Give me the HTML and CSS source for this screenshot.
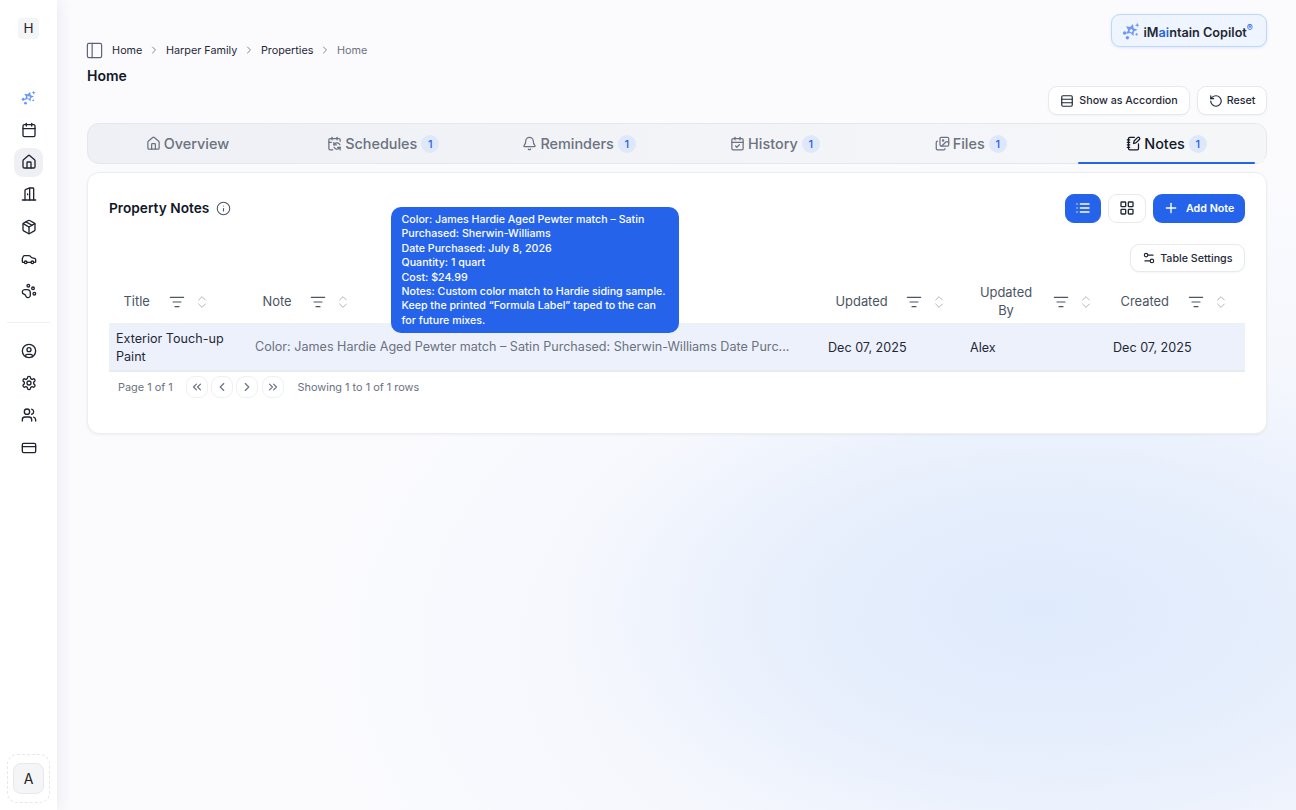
FILE: index.html
```html
<!DOCTYPE html>
<html lang="en">
<head>
<meta charset="utf-8">
<title>Home</title>
<link rel="stylesheet" href="styles.css">
</head>
<body>
<svg class="sprite" aria-hidden="true">
  <symbol id="i-sparkle" viewBox="0 0 24 24"><path fill-rule="evenodd" d="M14.6 2.6l.9 5.6 5.3 2-5 2.6-.5 5.7-4.1-4-5.6 1.3 2.6-5.1-2.9-4.9 5.6.9zM13.2 8.6l-1.5 1.6-2-.3 1 1.8-.9 1.8 2-.4 1.5 1.4.2-2 1.8-1-1.9-.7z"/><path d="M20.3 1l.9 2.3 2.3.9-2.3.9-.9 2.3-.9-2.3-2.3-.9 2.3-.9z"/><circle cx="3.6" cy="14.6" r="2.4"/><circle cx="7.2" cy="21" r="2.2"/><circle cx="19.5" cy="16.5" r="1.5"/></symbol>
  <symbol id="i-calendar" viewBox="0 0 24 24"><path d="M8 2v4"/><path d="M16 2v4"/><rect width="18" height="18" x="3" y="4" rx="2"/><path d="M3 10h18"/></symbol>
  <symbol id="i-house" viewBox="0 0 24 24"><path d="M15 21v-8a1 1 0 0 0-1-1h-4a1 1 0 0 0-1 1v8"/><path d="M3 10a2 2 0 0 1 .709-1.528l7-5.999a2 2 0 0 1 2.582 0l7 5.999A2 2 0 0 1 21 10v9a2 2 0 0 1-2 2H5a2 2 0 0 1-2-2z"/></symbol>
  <symbol id="i-door" viewBox="0 0 24 24"><path d="M2 21h20"/><path d="M13 3h5a1 1 0 0 1 1 1v17"/><path d="M6 21V6.5a1 1 0 0 1 .7-.95L12 3.2a.8.8 0 0 1 1 .8v17"/><path d="M10 12v1"/></symbol>
  <symbol id="i-package" viewBox="0 0 24 24"><path d="M11 21.73a2 2 0 0 0 2 0l7-4A2 2 0 0 0 21 16V8a2 2 0 0 0-1-1.73l-7-4a2 2 0 0 0-2 0l-7 4A2 2 0 0 0 3 8v8a2 2 0 0 0 1 1.73z"/><path d="M12 22V12"/><polyline points="3.29 7 12 12 20.71 7"/><path d="m7.5 4.27 9 5.15"/></symbol>
  <symbol id="i-car" viewBox="0 0 24 24"><path d="M19 17h2c.6 0 1-.4 1-1v-3c0-.9-.7-1.7-1.5-1.9C18.7 10.6 16 10 16 10s-1.3-1.4-2.2-2.3c-.5-.4-1.1-.7-1.8-.7H5c-.6 0-1.1.4-1.4.9l-1.4 2.9A3.7 3.7 0 0 0 2 12v4c0 .6.4 1 1 1h2"/><circle cx="7" cy="17" r="2"/><path d="M9 17h6"/><circle cx="17" cy="17" r="2"/></symbol>
  <symbol id="i-paw" viewBox="0 0 24 24"><circle cx="11" cy="4" r="2"/><circle cx="18" cy="8" r="2"/><circle cx="20" cy="16" r="2"/><path d="M9 10a5 5 0 0 1 5 5v3.5a3.5 3.5 0 0 1-6.84 1.045Q6.52 17.48 4.46 16.84A3.5 3.5 0 0 1 5.5 10Z"/></symbol>
  <symbol id="i-user" viewBox="0 0 24 24"><circle cx="12" cy="12" r="10"/><circle cx="12" cy="10" r="3"/><path d="M7 20.662V19a2 2 0 0 1 2-2h6a2 2 0 0 1 2 2v1.662"/></symbol>
  <symbol id="i-gear" viewBox="0 0 24 24"><path d="M12.22 2h-.44a2 2 0 0 0-2 2v.18a2 2 0 0 1-1 1.73l-.43.25a2 2 0 0 1-2 0l-.15-.08a2 2 0 0 0-2.73.73l-.22.38a2 2 0 0 0 .73 2.73l.15.1a2 2 0 0 1 1 1.72v.51a2 2 0 0 1-1 1.74l-.15.09a2 2 0 0 0-.73 2.73l.22.38a2 2 0 0 0 2.73.73l.15-.08a2 2 0 0 1 2 0l.43.25a2 2 0 0 1 1 1.73V20a2 2 0 0 0 2 2h.44a2 2 0 0 0 2-2v-.18a2 2 0 0 1 1-1.73l.43-.25a2 2 0 0 1 2 0l.15.08a2 2 0 0 0 2.73-.73l.22-.39a2 2 0 0 0-.73-2.73l-.15-.08a2 2 0 0 1-1-1.74v-.5a2 2 0 0 1 1-1.74l.15-.09a2 2 0 0 0 .73-2.73l-.22-.38a2 2 0 0 0-2.73-.73l-.15.08a2 2 0 0 1-2 0l-.43-.25a2 2 0 0 1-1-1.73V4a2 2 0 0 0-2-2z"/><circle cx="12" cy="12" r="3"/></symbol>
  <symbol id="i-users" viewBox="0 0 24 24"><path d="M16 21v-2a4 4 0 0 0-4-4H6a4 4 0 0 0-4 4v2"/><circle cx="9" cy="7" r="4"/><path d="M22 21v-2a4 4 0 0 0-3-3.87"/><path d="M16 3.13a4 4 0 0 1 0 7.75"/></symbol>
  <symbol id="i-card" viewBox="0 0 24 24"><rect width="20" height="14" x="2" y="5" rx="2"/><path d="M2 10h20"/></symbol>
  <symbol id="i-panel" viewBox="0 0 24 24"><rect width="18" height="18" x="3" y="3" rx="2"/><path d="M9 3v18"/></symbol>
  <symbol id="i-right" viewBox="0 0 24 24"><path d="m9 18 6-6-6-6"/></symbol>
  <symbol id="i-left" viewBox="0 0 24 24"><path d="m15 18-6-6 6-6"/></symbol>
  <symbol id="i-dleft" viewBox="0 0 24 24"><path d="m11 17-5-5 5-5"/><path d="m18 17-5-5 5-5"/></symbol>
  <symbol id="i-dright" viewBox="0 0 24 24"><path d="m6 17 5-5-5-5"/><path d="m13 17 5-5-5-5"/></symbol>
  <symbol id="i-rows" viewBox="0 0 24 24"><rect width="18" height="18" x="3" y="3" rx="2"/><path d="M21 9H3"/><path d="M21 15H3"/></symbol>
  <symbol id="i-reset" viewBox="0 0 24 24"><path d="M3 12a9 9 0 1 0 9-9 9.75 9.75 0 0 0-6.74 2.74L3 8"/><path d="M3 3v5h5"/></symbol>
  <symbol id="i-sync" viewBox="0 0 24 24"><path d="M11 10v4h4"/><path d="m11 14 1.535-1.605a5 5 0 0 1 8 1.5"/><path d="M16 2v4"/><path d="m21 18-1.535 1.605a5 5 0 0 1-8-1.5"/><path d="M21 22v-4h-4"/><path d="M21 8.5V6a2 2 0 0 0-2-2H5a2 2 0 0 0-2 2v14a2 2 0 0 0 2 2h4.3"/><path d="M3 10h4"/><path d="M8 2v4"/></symbol>
  <symbol id="i-bell" viewBox="0 0 24 24"><path d="M10.268 21a2 2 0 0 0 3.464 0"/><path d="M3.262 15.326A1 1 0 0 0 4 17h16a1 1 0 0 0 .74-1.673C19.41 13.956 18 12.499 18 8A6 6 0 0 0 6 8c0 4.499-1.411 5.956-2.738 7.326"/></symbol>
  <symbol id="i-check" viewBox="0 0 24 24"><path d="M8 2v4"/><path d="M16 2v4"/><rect width="18" height="18" x="3" y="4" rx="2"/><path d="M3 10h18"/><path d="m9 16 2 2 4-4"/></symbol>
  <symbol id="i-images" viewBox="0 0 24 24"><path d="m22 11-1.296-1.296a2.4 2.4 0 0 0-3.408 0L11 16"/><path d="M4 8a2 2 0 0 0-2 2v10a2 2 0 0 0 2 2h10a2 2 0 0 0 2-2"/><circle cx="13" cy="7" r="1"/><rect x="8" y="2" width="14" height="14" rx="2"/></symbol>
  <symbol id="i-notes" viewBox="0 0 24 24"><path d="M13.4 2H6a2 2 0 0 0-2 2v16a2 2 0 0 0 2 2h12a2 2 0 0 0 2-2v-7.4"/><path d="M2 6h4"/><path d="M2 10h4"/><path d="M2 14h4"/><path d="M2 18h4"/><path d="M21.378 5.626a1 1 0 1 0-3.004-3.004l-5.01 5.012a2 2 0 0 0-.506.854l-.837 2.87a.5.5 0 0 0 .62.62l2.87-.837a2 2 0 0 0 .854-.506z"/></symbol>
  <symbol id="i-info" viewBox="0 0 24 24"><circle cx="12" cy="12" r="10"/><path d="M12 16v-4"/><path d="M12 8h.01"/></symbol>
  <symbol id="i-list" viewBox="0 0 24 24"><path d="M3 12h.01"/><path d="M3 18h.01"/><path d="M3 6h.01"/><path d="M8 12h13"/><path d="M8 18h13"/><path d="M8 6h13"/></symbol>
  <symbol id="i-grid" viewBox="0 0 24 24"><rect width="7" height="7" x="3" y="3" rx="1"/><rect width="7" height="7" x="14" y="3" rx="1"/><rect width="7" height="7" x="14" y="14" rx="1"/><rect width="7" height="7" x="3" y="14" rx="1"/></symbol>
  <symbol id="i-plus" viewBox="0 0 24 24"><path d="M5 12h14"/><path d="M12 5v14"/></symbol>
  <symbol id="i-sliders" viewBox="0 0 24 24"><path d="M14 17H5"/><path d="M19 7h-9"/><circle cx="17" cy="17" r="3"/><circle cx="7" cy="7" r="3"/></symbol>
  <symbol id="i-filter" viewBox="0 0 24 24"><path d="M2 5h20"/><path d="M6 12h12"/><path d="M9 19h6"/></symbol>
  <symbol id="i-sort" viewBox="0 0 24 24"><path d="m7 15 5 5 5-5"/><path d="m7 9 5-5 5 5"/></symbol>
</svg>

<div class="app">
  <aside class="sidebar">
    <div class="brand">H</div>
    <nav class="nav">
      <a class="nav-item"><svg class="ico ico-15 sparkle"><use href="#i-sparkle"/></svg></a>
      <a class="nav-item"><svg class="ico ico-16"><use href="#i-calendar"/></svg></a>
      <a class="nav-item active"><span class="nav-tile"><svg class="ico ico-16"><use href="#i-house"/></svg></span></a>
      <a class="nav-item"><svg class="ico ico-16"><use href="#i-door"/></svg></a>
      <a class="nav-item"><svg class="ico ico-16"><use href="#i-package"/></svg></a>
      <a class="nav-item"><svg class="ico ico-16"><use href="#i-car"/></svg></a>
      <a class="nav-item"><svg class="ico ico-16"><use href="#i-paw"/></svg></a>
    </nav>
    <div class="nav-divider"></div>
    <nav class="nav">
      <a class="nav-item"><svg class="ico ico-16"><use href="#i-user"/></svg></a>
      <a class="nav-item"><svg class="ico ico-16"><use href="#i-gear"/></svg></a>
      <a class="nav-item"><svg class="ico ico-16"><use href="#i-users"/></svg></a>
      <a class="nav-item"><svg class="ico ico-16"><use href="#i-card"/></svg></a>
    </nav>
    <div class="account"><div class="avatar">A</div></div>
  </aside>

  <main class="main">
    <header class="topbar">
      <div class="heading">
        <div class="crumbs">
          <svg class="ico crumb-panel"><use href="#i-panel"/></svg>
          <span class="crumb">Home</span>
          <svg class="ico ico-12 crumb-sep"><use href="#i-right"/></svg>
          <span class="crumb">Harper Family</span>
          <svg class="ico ico-12 crumb-sep"><use href="#i-right"/></svg>
          <span class="crumb">Properties</span>
          <svg class="ico ico-12 crumb-sep"><use href="#i-right"/></svg>
          <span class="crumb current">Home</span>
        </div>
        <h1 class="title">Home</h1>
      </div>
      <button class="copilot">
        <svg class="ico copilot-ico sparkle"><use href="#i-sparkle"/></svg>
        <span class="copilot-text">iM<b>ai</b>ntain Copilot<sup>®</sup></span>
      </button>
    </header>

    <div class="actions">
      <button class="btn"><svg class="ico ico-14"><use href="#i-rows"/></svg>Show as Accordion</button>
      <button class="btn btn-reset"><svg class="ico ico-14"><use href="#i-reset"/></svg>Reset</button>
    </div>

    <div class="tabs">
      <div class="tab"><svg class="ico ico-15"><use href="#i-house"/></svg><span>Overview</span></div>
      <div class="tab"><svg class="ico ico-15"><use href="#i-sync"/></svg><span>Schedules</span><i class="count">1</i></div>
      <div class="tab"><svg class="ico ico-15"><use href="#i-bell"/></svg><span>Reminders</span><i class="count">1</i></div>
      <div class="tab"><svg class="ico ico-15"><use href="#i-check"/></svg><span>History</span><i class="count">1</i></div>
      <div class="tab"><svg class="ico ico-15"><use href="#i-images"/></svg><span>Files</span><i class="count">1</i></div>
      <div class="tab selected"><svg class="ico ico-15"><use href="#i-notes"/></svg><span>Notes</span><i class="count">1</i></div>
    </div>

    <section class="card">
      <div class="card-head">
        <div class="card-title"><h2>Property Notes</h2><svg class="ico ico-15 info"><use href="#i-info"/></svg></div>
        <div class="card-tools">
          <button class="square primary"><svg class="ico ico-16"><use href="#i-list"/></svg></button>
          <button class="square wide"><svg class="ico ico-16"><use href="#i-grid"/></svg></button>
          <button class="add"><svg class="ico ico-16"><use href="#i-plus"/></svg>Add Note</button>
        </div>
      </div>
      <div class="settings-row">
        <button class="btn btn-settings"><svg class="ico ico-14"><use href="#i-sliders"/></svg>Table Settings</button>
      </div>

      <div class="table">
        <div class="thead">
          <div class="th"><span>Title</span><svg class="ico ico-16 filter"><use href="#i-filter"/></svg><svg class="ico ico-16 sort"><use href="#i-sort"/></svg></div>
          <div class="th"><span>Note</span><svg class="ico ico-16 filter"><use href="#i-filter"/></svg><svg class="ico ico-16 sort"><use href="#i-sort"/></svg></div>
          <div class="th"><span>Updated</span><svg class="ico ico-16 filter"><use href="#i-filter"/></svg><svg class="ico ico-16 sort"><use href="#i-sort"/></svg></div>
          <div class="th"><span class="th-wrap">Updated By</span><svg class="ico ico-16 filter"><use href="#i-filter"/></svg><svg class="ico ico-16 sort"><use href="#i-sort"/></svg></div>
          <div class="th"><span>Created</span><svg class="ico ico-16 filter"><use href="#i-filter"/></svg><svg class="ico ico-16 sort"><use href="#i-sort"/></svg></div>
        </div>
        <div class="tr">
          <div class="td strong">Exterior Touch-up Paint</div>
          <div class="td muted">Color: James Hardie Aged Pewter match – Satin Purchased: Sherwin-Williams Date Purc...</div>
          <div class="td strong">Dec 07, 2025</div>
          <div class="td strong">Alex</div>
          <div class="td strong">Dec 07, 2025</div>
        </div>
      </div>

      <div class="pager">
        <span class="pager-text">Page 1 of 1</span>
        <div class="pager-btns">
          <button class="page-btn"><svg class="ico ico-14"><use href="#i-dleft"/></svg></button>
          <button class="page-btn"><svg class="ico ico-14"><use href="#i-left"/></svg></button>
          <button class="page-btn"><svg class="ico ico-14"><use href="#i-right"/></svg></button>
          <button class="page-btn"><svg class="ico ico-14"><use href="#i-dright"/></svg></button>
        </div>
        <span class="pager-text">Showing 1 to 1 of 1 rows</span>
      </div>

      <div class="tooltip">Color: James Hardie Aged Pewter match – Satin<br>Purchased: Sherwin-Williams<br>Date Purchased: July 8, 2026<br>Quantity: 1 quart<br>Cost: $24.99<br>Notes: Custom color match to Hardie siding sample. Keep the printed “Formula Label” taped to the can for future mixes.</div>
    </section>
  </main>
</div>
</body>
</html>
```
FILE: styles.css
```css
* { box-sizing: border-box; }
html, body { margin: 0; height: 100%; }
body {
  font-family: Inter, "Liberation Sans", sans-serif;
  color: #111827;
  overflow: hidden;
  background:
    radial-gradient(ellipse 480px 260px at 1040px 610px, #dfeafc 0%, rgba(226,236,252,.8) 40%, rgba(240,244,253,0) 100%),
    radial-gradient(ellipse 860px 480px at 1150px 650px, #ebf1fc 0%, rgba(246,248,253,0) 100%),
    #fbfbfe;
}
.sprite { position: absolute; width: 0; height: 0; }
button { font-family: inherit; cursor: pointer; }
.ico { display: block; flex: none; fill: none; stroke: currentColor; stroke-width: 2; stroke-linecap: round; stroke-linejoin: round; }
.ico-12 { width: 12px; height: 12px; }
.ico-14 { width: 14px; height: 14px; }
.ico-15 { width: 15px; height: 15px; }
.ico-16 { width: 16px; height: 16px; }
.copilot-ico { width: 18px; height: 18px; }
.sparkle { fill: #6d97f7; stroke: none; color: #6d97f7; }

.app { display: flex; height: 810px; }

.sidebar {
  width: 57px; flex: none; background: #fff;
  display: flex; flex-direction: column; align-items: center;
  padding-top: 18px;
  box-shadow: 2px 0 14px rgba(40, 50, 110, .09);
  position: relative;
}
.brand { width: 21px; height: 21px; border-radius: 4px; background: #f4f5f7; font-size: 13.5px; line-height: 21px; text-align: center; color: #1f2430; margin-bottom: 42.3px; }
.nav { display: flex; flex-direction: column; width: 100%; }
.nav-item { height: 32.33px; display: flex; align-items: center; justify-content: center; color: #1f2430; }
.nav-tile { width: 29px; height: 29px; border-radius: 9px; background: #eff0f3; display: flex; align-items: center; justify-content: center; }
.nav-divider { width: 43px; height: 1px; background: #eeeff2; margin: 14px 0 12px; }
.account { margin-top: auto; margin-bottom: 7px; width: 43px; height: 49px; border: 1px dashed #e6e7eb; border-radius: 10px; display: flex; align-items: center; justify-content: center; }
.avatar { width: 31px; height: 31px; border-radius: 8px; background: #f4f5f7; border: 1px solid #e7e8ec; font-size: 14px; line-height: 29px; text-align: center; color: #222; }

.main { flex: 1; min-width: 0; padding: 14px 29px 0 30px; }
.topbar { display: flex; justify-content: space-between; height: 72px; }
.heading { padding-top: 28px; }
.crumbs { display: flex; align-items: center; height: 16px; font-size: 10.8px; color: #1f2937; }
.crumb-panel { width: 19px; height: 19px; color: #5b6472; stroke-width: 1.5; margin: 0 8.5px 0 -2.4px; }
.crumb-sep { color: #6b7280; margin: 0 5.8px; stroke-width: 1.7; }
.current { color: #6b7280; }
.title { margin: 9px 0 0; font-size: 14px; line-height: 18px; font-weight: 600; color: #111827; }
.copilot { height: 33px; width: 156px; border: 1.5px solid #bcd7fb; border-radius: 9px; background: #eff5fe; display: flex; align-items: center; gap: 4px; padding: 0 0 0 9.5px; box-shadow: 0 1px 3px rgba(37,99,235,.12); }
.copilot-text { font-size: 12.7px; font-weight: 600; color: #1f2937; white-space: nowrap; position: relative; top: 2px; }
.copilot-text b { color: #2563eb; font-weight: 600; }
.copilot-text sup { color: #2563eb; font-size: 9px; font-weight: 500; line-height: 0; position: relative; top: -1px; vertical-align: super; }

.actions { display: flex; justify-content: flex-end; gap: 7px; height: 29px; }
.btn { height: 29px; padding: 0 11.5px; display: flex; align-items: center; gap: 5px; border: 1px solid #e8e9ed; border-radius: 9px; background: #fff; font-size: 10.7px; font-weight: 500; color: #1f2937; box-shadow: 0 1px 2px rgba(17,24,39,.04); white-space: nowrap; }
.btn-reset { padding: 0 10.5px; gap: 4px; }

.tabs { margin-top: 8px; height: 41px; display: grid; grid-template-columns: repeat(6, 1fr); padding: 0 1.5px; border: 1px solid #e5e7eb; border-radius: 12px; background: linear-gradient(90deg, #eef0f5, #f6f7f9); }
.tab { display: flex; align-items: center; justify-content: center; gap: 3px; font-size: 14.4px; font-weight: 500; color: #6b7280; position: relative; }
.tab .count { margin-left: 1px; }
.selected { color: #111827; background: #f5f6f8; border-radius: 8px 8px 0 0; }
.selected::after { content: ""; position: absolute; left: 9px; right: 9px; bottom: -1px; height: 2px; background: #2563eb; border-radius: 1px; }
.count { width: 18px; height: 18px; border-radius: 50%; background: #dfe7fb; color: #2563eb; font-size: 11px; font-style: normal; font-weight: 500; line-height: 18px; text-align: center; }

.card { position: relative; margin-top: 8px; height: 262px; padding: 21px 21px 0; background: #fff; border: 1px solid #eceef2; border-radius: 12px; box-shadow: 0 1px 3px rgba(17,24,39,.05); }
.card-head { display: flex; justify-content: space-between; align-items: center; height: 28px; }
.card-title { display: flex; align-items: center; gap: 6.5px; }
.card-title h2 { margin: 0; font-size: 13.7px; font-weight: 600; color: #111827; }
.info { color: #4b5563; stroke-width: 1.7; }
.card-tools { display: flex; gap: 7.5px; }
.square { width: 36px; height: 29px; border: 1px solid #e8e9ed; border-radius: 9px; background: #fff; display: flex; align-items: center; justify-content: center; color: #1f2937; padding: 0; }
.wide { width: 37.5px; }
.primary { background: #2563eb; border-color: #2563eb; color: #fff; }
.add { width: 92px; height: 29px; border: 0; border-radius: 9px; background: #2563eb; color: #fff; font-size: 10.7px; font-weight: 600; display: flex; align-items: center; gap: 7px; padding: 0 0 0 10px; }
.settings-row { display: flex; justify-content: flex-end; margin-top: 22px; }
.btn-settings { height: 28px; gap: 4px; }

.table { margin-top: 8px; }
.thead, .tr { display: grid; grid-template-columns: 139px 573px 142px 143px 139px; }
.thead { height: 44px; border-bottom: 1px solid #eef0f4; }
.th { display: flex; align-items: center; padding-left: 14.5px; font-size: 12.9px; font-weight: 400; color: #4b5563; line-height: 18px; }
.th-wrap { width: 57px; text-align: center; }
.filter { margin-left: 18.7px; color: #4b5563; stroke-width: 1.7; }
.sort { margin-left: 9px; color: #a3a9b3; stroke-width: 1.3; }
.tr { height: 48px; background: #edf1fb; border-bottom: 2px solid #e9ebf0; }
.td { display: flex; align-items: center; padding: 0 7px; font-size: 12.6px; line-height: 18px; }
.strong { color: #1f2937; padding-top: 1px; }
.muted { color: #6b7280; white-space: nowrap; padding-bottom: 1px; }

.pager { display: flex; align-items: center; height: 29px; padding-left: 9px; }
.pager-text { font-size: 10.9px; color: #6b7280; }
.pager-btns { display: flex; gap: 3.3px; margin: 0 14px 0 13px; }
.page-btn { width: 22px; height: 22px; border: 1px solid #eef0f3; border-radius: 9px; background: #fff; color: #6b7280; display: flex; align-items: center; justify-content: center; padding: 0; }

.tooltip { position: absolute; left: 303px; top: 34px; width: 288px; height: 126px; padding: 6px 10.5px; background: #2563eb; color: #fff; border-radius: 10px; font-size: 10.66px; font-weight: 500; line-height: 14.4px; }
```
